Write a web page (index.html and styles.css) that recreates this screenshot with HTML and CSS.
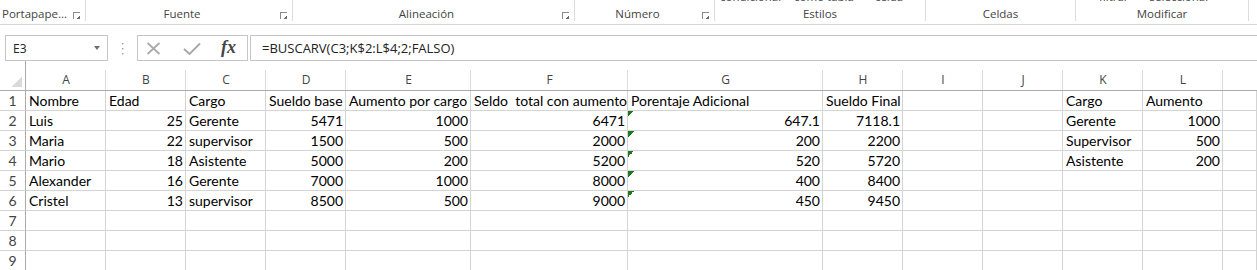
FILE: index.html
```html
<!DOCTYPE html>
<html lang="es">
<head>
<meta charset="utf-8">
<title>Excel</title>
<link rel="stylesheet" href="styles.css">
</head>
<body>
<div class="ribbon">
  <div class="grp g1"><div class="cut"></div><div class="foot"><span class="lbl left">Portapape...</span><i class="launch"></i></div></div>
  <div class="grp g2"><div class="cut"></div><div class="foot"><span class="lbl">Fuente</span><i class="launch"></i></div></div>
  <div class="grp g3"><div class="cut"></div><div class="foot"><span class="lbl">Alineación</span><i class="launch"></i></div></div>
  <div class="grp g4"><div class="cut"></div><div class="foot"><span class="lbl">Número</span><i class="launch"></i></div></div>
  <div class="grp g5"><div class="cut c5"><span>condicional</span><span>como tabla</span><span>celda</span></div><div class="foot"><span class="lbl">Estilos</span></div></div>
  <div class="grp g6"><div class="cut"></div><div class="foot"><span class="lbl">Celdas</span></div></div>
  <div class="grp g7"><div class="cut c7"><span>filtrar</span><span>seleccionar</span></div><div class="foot"><span class="lbl">Modificar</span></div></div>
  <div class="grp g8"></div>
</div>

<div class="fbar">
  <div class="namebox"><span>E3</span><i class="drop"></i></div>
  <div class="dots"><svg width="3" height="13" viewBox="0 0 3 13"><rect x="1" y="1" width="1.4" height="1.4" fill="#9c9c9c"/><rect x="1" y="6" width="1.4" height="1.4" fill="#9c9c9c"/><rect x="1" y="11" width="1.4" height="1.4" fill="#9c9c9c"/></svg></div>
  <div class="fxbox">
    <svg class="ico-x" width="15" height="13" viewBox="0 0 15 13"><path d="M1.5 1 L13.5 12 M13.5 1 L1.5 12" stroke="#a9a9a9" stroke-width="1.7" fill="none"/></svg>
    <svg class="ico-ok" width="18" height="13" viewBox="0 0 18 13"><path d="M1 7 L6.5 12 L17 1.5" stroke="#a9a9a9" stroke-width="1.9" fill="none"/></svg>
    <span class="fx">fx</span>
  </div>
  <div class="formula">=BUSCARV(C3;K$2:L$4;2;FALSO)</div>
</div>

<div class="sheet">
  <div class="corner"><i class="tri"></i></div>
  <div class="ch">A</div><div class="ch">B</div><div class="ch">C</div><div class="ch">D</div><div class="ch">E</div><div class="ch">F</div><div class="ch">G</div><div class="ch">H</div><div class="ch">I</div><div class="ch">J</div><div class="ch">K</div><div class="ch">L</div><div class="ch last"></div>

  <div class="rh">1</div><div class="c">Nombre</div><div class="c">Edad</div><div class="c">Cargo</div><div class="c">Sueldo base</div><div class="c">Aumento por cargo</div><div class="c">Seldo&nbsp; total con aumento</div><div class="c">Porentaje Adicional</div><div class="c">Sueldo Final</div><div class="c"></div><div class="c"></div><div class="c">Cargo</div><div class="c">Aumento</div><div class="c"></div>

  <div class="rh">2</div><div class="c">Luis</div><div class="c n">25</div><div class="c">Gerente</div><div class="c n">5471</div><div class="c n">1000</div><div class="c n">6471</div><div class="c n warn">647.1</div><div class="c n">7118.1</div><div class="c"></div><div class="c"></div><div class="c">Gerente</div><div class="c n">1000</div><div class="c"></div>

  <div class="rh">3</div><div class="c">Maria</div><div class="c n">22</div><div class="c">supervisor</div><div class="c n">1500</div><div class="c n">500</div><div class="c n">2000</div><div class="c n warn">200</div><div class="c n">2200</div><div class="c"></div><div class="c"></div><div class="c">Supervisor</div><div class="c n">500</div><div class="c"></div>

  <div class="rh">4</div><div class="c">Mario</div><div class="c n">18</div><div class="c">Asistente</div><div class="c n">5000</div><div class="c n">200</div><div class="c n">5200</div><div class="c n warn">520</div><div class="c n">5720</div><div class="c"></div><div class="c"></div><div class="c">Asistente</div><div class="c n">200</div><div class="c"></div>

  <div class="rh">5</div><div class="c">Alexander</div><div class="c n">16</div><div class="c">Gerente</div><div class="c n">7000</div><div class="c n">1000</div><div class="c n">8000</div><div class="c n warn">400</div><div class="c n">8400</div><div class="c"></div><div class="c"></div><div class="c"></div><div class="c"></div><div class="c"></div>

  <div class="rh">6</div><div class="c">Cristel</div><div class="c n">13</div><div class="c">supervisor</div><div class="c n">8500</div><div class="c n">500</div><div class="c n">9000</div><div class="c n warn">450</div><div class="c n">9450</div><div class="c"></div><div class="c"></div><div class="c"></div><div class="c"></div><div class="c"></div>

  <div class="rh">7</div><div class="c"></div><div class="c"></div><div class="c"></div><div class="c"></div><div class="c"></div><div class="c"></div><div class="c"></div><div class="c"></div><div class="c"></div><div class="c"></div><div class="c"></div><div class="c"></div><div class="c"></div>

  <div class="rh">8</div><div class="c"></div><div class="c"></div><div class="c"></div><div class="c"></div><div class="c"></div><div class="c"></div><div class="c"></div><div class="c"></div><div class="c"></div><div class="c"></div><div class="c"></div><div class="c"></div><div class="c"></div>

  <div class="rh">9</div><div class="c"></div><div class="c"></div><div class="c"></div><div class="c"></div><div class="c"></div><div class="c"></div><div class="c"></div><div class="c"></div><div class="c"></div><div class="c"></div><div class="c"></div><div class="c"></div><div class="c"></div>
</div>
</body>
</html>
```

FILE: styles.css
```css
* { box-sizing: border-box; margin: 0; padding: 0; }
html, body { background: #fff; }
body {
  width: 1257px;
  height: 270px;
  overflow: hidden;
  font-family: "Open Sans", "Noto Sans", sans-serif;
  color: #000;
}

/* ---------- ribbon ---------- */
.ribbon {
  display: flex;
  height: 25px;
  border-bottom: 1px solid #d6d6d6;
}
.grp {
  height: 21px;
  border-right: 1px solid #dcdcdc;
  display: flex;
  flex-direction: column;
  justify-content: space-between;
}
.g1 { width: 86px; }
.g2 { width: 207px; }
.g3 { width: 282px; }
.g4 { width: 140px; }
.g5 { width: 211px; }
.g6 { width: 150px; }
.g7 { width: 173px; }
.g8 { flex: 1; border-right: 0; }

.cut {
  height: 3px;
  overflow: hidden;
  display: flex;
  font-size: 11.5px;
  line-height: 14px;
  color: #444;
}
.cut span { display: block; margin-top: -10px; white-space: nowrap; }
.c5 { padding-left: 5px; }
.c5 span:nth-child(2) { margin-left: 13px; }
.c5 span:nth-child(3) { margin-left: 21px; }
.c7 { padding-left: 23px; }
.c7 span:nth-child(2) { margin-left: 21px; }

.foot {
  display: flex;
  align-items: flex-end;
  height: 14px;
}
.lbl {
  flex: 1;
  text-align: center;
  font-size: 11.5px;
  line-height: 14px;
  color: #444;
  white-space: nowrap;
}
.lbl.left { text-align: left; padding-left: 2px; }
.launch {
  display: block;
  width: 7px;
  height: 7px;
  margin: 0 5px 2px 2px;
  border-left: 1px solid #8a8a8a;
  border-top: 1px solid #8a8a8a;
  background: linear-gradient(135deg, transparent 0 55%, #6b6b6b 55%) right bottom / 4px 4px no-repeat;
}

/* ---------- formula bar ---------- */
.fbar {
  display: flex;
  height: 26px;
  margin-top: 10px;
}
.namebox {
  width: 103px;
  margin-left: 5px;
  border: 1px solid #c6c6c6;
  display: flex;
  align-items: center;
  justify-content: space-between;
  padding: 0 7px 0 7px;
  font-size: 12px;
  color: #222;
}
.drop {
  display: block;
  width: 0;
  height: 0;
  border-left: 3.5px solid transparent;
  border-right: 3.5px solid transparent;
  border-top: 4px solid #707070;
}
.dots {
  width: 29px;
  display: flex;
  align-items: center;
  justify-content: center;
}
.fxbox {
  width: 111px;
  border: 1px solid #c6c6c6;
  display: flex;
  align-items: center;
  padding-left: 8px;
}
.ico-ok { margin-left: 22px; }
.fx {
  margin-left: 20px;
  font-family: "Liberation Serif", serif;
  font-style: italic;
  font-weight: bold;
  font-size: 18px;
  color: #444;
  line-height: 1;
  margin-top: -2px;
}
.formula {
  flex: 1;
  margin-left: 2px;
  border: 1px solid #c6c6c6;
  border-right: 0;
  padding-left: 11px;
  font-size: 13px;
  line-height: 24px;
  color: #222;
}

/* ---------- sheet ---------- */
.sheet {
  display: grid;
  grid-template-columns: 26px 80px 80px 80px 80px 125px 157px 195px 80px 80px 80px 80px 80px 1fr;
  grid-template-rows: 30px repeat(9, 20px);
}
.corner {
  border-right: 1px solid #ababab;
  border-bottom: 1px solid #ababab;
  display: flex;
  align-items: flex-end;
  justify-content: flex-end;
  padding: 0 3px 3px 0;
}
.tri {
  display: block;
  width: 10px;
  height: 11px;
  background: linear-gradient(to bottom right, transparent 0 50%, #dadada 50%);
}
.ch {
  border-bottom: 1px solid #ababab;
  background: linear-gradient(#dcdcdc, #dcdcdc) right bottom / 1px 20px no-repeat;
  font-family: "Open Sans", sans-serif;
  font-size: 12px;
  color: #444;
  text-align: center;
  line-height: 20px;
  padding-top: 9px;
}
.ch.last { background: none; }
.rh {
  border-right: 1px solid #ababab;
  border-bottom: 1px solid #d4d4d4;
  font-family: "Lato", sans-serif;
  font-size: 14px;
  line-height: 19px;
  color: #444;
  text-align: center;
}
.c {
  border-right: 1px solid #d4d4d4;
  border-bottom: 1px solid #d4d4d4;
  font-family: "Lato", sans-serif;
  font-size: 14px;
  line-height: 19px;
  padding: 0 2px 0 3px;
  white-space: nowrap;
  overflow: hidden;
}
.c.n { text-align: right; }
.c.warn {
  background: linear-gradient(135deg, #1c7a1c 0 50%, transparent 50%) left top / 6px 6px no-repeat;
}
```
